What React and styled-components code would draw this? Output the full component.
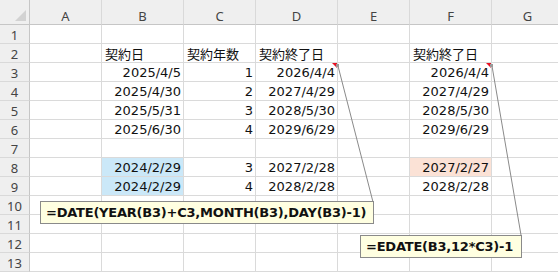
import styled, { createGlobalStyle } from "styled-components";

const GlobalStyle = createGlobalStyle`
  html, body { margin: 0; padding: 0; background: #fff; }
  body { font-family: "DejaVu Sans", "Noto Sans CJK JP", sans-serif; }
`;

const COLS = ["A", "B", "C", "D", "E", "F", "G"];
const WIDTHS = [30, 72, 82, 72, 82, 72, 82, 72];

// each row: [B, C, D, F] values plus fills
const ROWS = [
  {},
  { B: "契約日", C: "契約年数", D: "契約終了日", F: "契約終了日", text: true },
  { B: "2025/4/5", C: "1", D: "2026/4/4", F: "2026/4/4", note: true },
  { B: "2025/4/30", C: "2", D: "2027/4/29", F: "2027/4/29" },
  { B: "2025/5/31", C: "3", D: "2028/5/30", F: "2028/5/30" },
  { B: "2025/6/30", C: "4", D: "2029/6/29", F: "2029/6/29" },
  {},
  { B: "2024/2/29", C: "3", D: "2027/2/28", F: "2027/2/27", fillB: "#cbe8f8", fillF: "#fbe2d6" },
  { B: "2024/2/29", C: "4", D: "2028/2/28", F: "2028/2/28", fillB: "#cbe8f8" },
  {},
  {},
  {},
  {},
];

const Page = styled.div`
  position: relative;
  width: 558px;
  height: 273px;
  overflow: hidden;
`;

const Sheet = styled.div`
  display: grid;
  grid-template-columns: ${WIDTHS.map((w) => w + "px").join(" ")};
  grid-template-rows: 25px repeat(13, 19px);
`;

const Corner = styled.div`
  position: relative;
  background: #efefef;
  border-right: 1px solid #c6c6c6;
  border-bottom: 1px solid #c6c6c6;
  box-sizing: border-box;
  &::after {
    content: "";
    position: absolute;
    right: 3px;
    bottom: 3px;
    border-left: 11px solid transparent;
    border-bottom: 11px solid #d2d2d2;
  }
`;

const ColHead = styled.div`
  background: #efefef;
  border-right: 1px solid #d9d9d9;
  border-bottom: 1px solid #c6c6c6;
  box-sizing: border-box;
  display: flex;
  align-items: center;
  justify-content: center;
  padding-top: 7px;
  font-family: "Noto Sans", sans-serif;
  font-size: 13px;
  color: #444;
`;

const RowHead = styled.div`
  background: #efefef;
  border-right: 1px solid #c6c6c6;
  border-bottom: 1px solid #d9d9d9;
  box-sizing: border-box;
  display: flex;
  align-items: center;
  justify-content: center;
  padding-top: 1px;
  font-family: "Noto Sans", sans-serif;
  font-size: 13px;
  color: #444;
`;

const Cell = styled.div`
  position: relative;
  background: ${(p) => p.$fill || "#fff"};
  border-right: 1px solid #dadada;
  border-bottom: 1px solid #dadada;
  box-sizing: border-box;
  display: flex;
  align-items: center;
  justify-content: ${(p) => (p.$left ? "flex-start" : "flex-end")};
  padding: 1px 2px 0 3px;
  font-size: 13px;
  color: #111;
  white-space: nowrap;
  ${(p) =>
    p.$note &&
    `&::after {
      content: "";
      position: absolute;
      top: 0;
      right: 0;
      border-left: 5px solid transparent;
      border-top: 5px solid #e81123;
    }`}
`;

const Comment = styled.div`
  position: absolute;
  left: ${(p) => p.$x}px;
  top: ${(p) => p.$y}px;
  width: ${(p) => p.$w}px;
  height: 23px;
  box-sizing: border-box;
  padding: 0 5px;
  display: flex;
  align-items: center;
  background: #ffffe1;
  border: 1px solid #8a8a8a;
  font-family: "DejaVu Sans", "Noto Sans CJK JP", sans-serif;
  font-weight: 700;
  font-size: 13px;
  letter-spacing: -0.22px;
  color: #111;
  white-space: nowrap;
`;

const Leaders = styled.svg`
  position: absolute;
  left: 0;
  top: 0;
  pointer-events: none;
`;

export default function App() {
  return (
    <Page>
      <GlobalStyle />
      <Sheet>
        <Corner />
        {COLS.map((c) => (
          <ColHead key={c}>{c}</ColHead>
        ))}
        {ROWS.map((r, i) => [
          <RowHead key={"h" + i}>{i + 1}</RowHead>,
          ...COLS.map((c) => (
            <Cell
              key={c + i}
              $left={r.text}
              $fill={c === "B" ? r.fillB : c === "F" ? r.fillF : undefined}
              $note={r.note && (c === "D" || c === "F")}
            >
              {r[c] || ""}
            </Cell>
          )),
        ])}
      </Sheet>
      <Leaders width="558" height="273">
        <line x1="338" y1="66" x2="373" y2="202" stroke="#8a8a8a" strokeWidth="1" />
        <line x1="492" y1="66" x2="521" y2="235" stroke="#8a8a8a" strokeWidth="1" />
        <rect x="336" y="64" width="3" height="3" fill="#9a9a9a" />
        <rect x="490" y="64" width="3" height="3" fill="#9a9a9a" />
      </Leaders>
      <Comment $x={40} $y={201} $w={334}>=DATE(YEAR(B3)+C3,MONTH(B3),DAY(B3)-1)</Comment>
      <Comment $x={360} $y={235} $w={162}>=EDATE(B3,12*C3)-1</Comment>
    </Page>
  );
}
